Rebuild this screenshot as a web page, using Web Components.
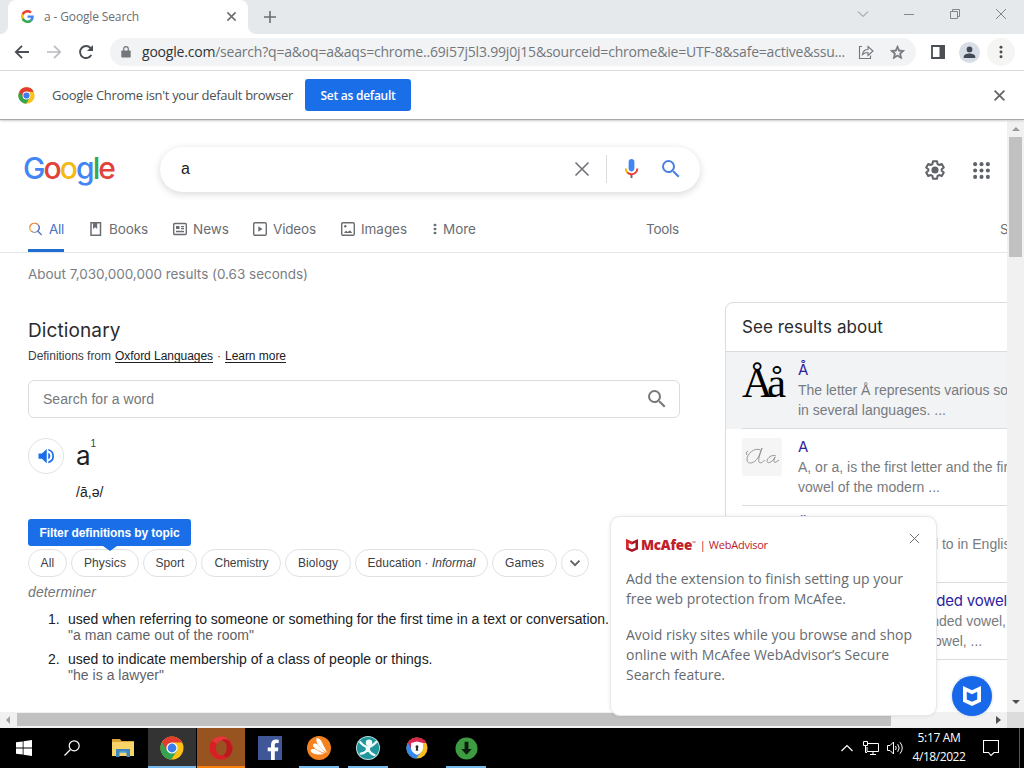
<!DOCTYPE html>
<html lang="en">
<head>
<meta charset="utf-8">
<title>a - Google Search</title>
<style>
html,body{margin:0;height:100%;overflow:hidden;background:#fff}
body{font-family:"Liberation Sans",Arial,sans-serif;font-size:14px;color:#202124}
</style>
</head>
<body>
<desktop-screen></desktop-screen>
<script>
const define = (name, css, html, after) => {
  customElements.define(name, class extends HTMLElement {
    connectedCallback() {
      if (this.shadowRoot) return;
      const root = this.attachShadow({mode: 'open'});
      root.innerHTML = `<style>*{box-sizing:border-box}${css}</style>` + (typeof html === 'function' ? html(this) : html);
      if (after) after(this, root);
    }
  });
};

// Text run whose tracking is set so that it fills the width in its "w" attribute.
define('t-run', ':host{display:inline-block;white-space:pre;flex:none}span{display:inline-block}:host([u]) span{text-decoration:underline;text-underline-offset:2px}', '<span><slot></slot></span>', (el, root) => {
  const w = parseFloat(el.getAttribute('w'));
  if (!w) return;
  el.style.width = w + 'px';
  const s = root.querySelector('span');
  const natural = s.getBoundingClientRect().width;
  s.style.letterSpacing = ((w - natural) / el.textContent.length) + 'px';
});

const chromeLogo = `<circle cx="12" cy="12" r="11.5" fill="#fbc116"/><path d="M12 12 2 6.2A11.5 11.5 0 0 0 11.2 23.5L17 14.8Z" fill="#32a350"/><path d="M12 6.6H22.2A11.5 11.5 0 0 0 2 6.3L7.2 14.7 12 12Z" fill="#e33b2e"/><circle cx="12" cy="12" r="5.6" fill="#fff"/><circle cx="12" cy="12" r="4.4" fill="#3c7ded"/>`;
const shield = 'M0 0 6 2.7 12 0V10.2L6 13 0 10.2ZM2.5 3.8V8.7L6 10.3 9.5 8.7V3.8L6 5.4Z';
const lens = 'M15.5 14h-.79l-.28-.27A6.47 6.47 0 0 0 16 9.5 6.5 6.5 0 1 0 9.5 16c1.61 0 3.09-.59 4.23-1.57l.27.28v.79l5 4.99L20.49 19l-4.99-5zm-6 0C7.01 14 5 11.99 5 9.5S7.01 5 9.5 5 14 7.01 14 9.5 11.99 14 9.5 14z';
const icons = {
  g: ['0 0 48 48', '<path fill="#EA4335" d="M24 9.5c3.54 0 6.71 1.22 9.21 3.6l6.85-6.85C35.9 2.38 30.47 0 24 0 14.62 0 6.51 5.38 2.56 13.22l7.98 6.19C12.43 13.72 17.74 9.5 24 9.5z"/><path fill="#4285F4" d="M46.98 24.55c0-1.57-.15-3.09-.38-4.55H24v9.02h12.94c-.58 2.96-2.26 5.48-4.78 7.18l7.73 6c4.51-4.18 7.09-10.36 7.09-17.65z"/><path fill="#FBBC05" d="M10.53 28.59a14.5 14.5 0 0 1 0-9.18l-7.98-6.19a24 24 0 0 0 0 21.56l7.98-6.19z"/><path fill="#34A853" d="M24 48c6.48 0 11.93-2.13 15.89-5.81l-7.73-6c-2.15 1.45-4.92 2.3-8.16 2.3-6.26 0-11.57-4.22-13.47-9.91l-7.98 6.19C6.51 42.62 14.62 48 24 48z"/>'],
  x: ['0 0 12 12', '<path d="m1.5 1.5 9 9m0-9-9 9" stroke="currentColor" stroke-width="1.7" fill="none"/>'],
  thinx: ['0 0 12 12', '<path d="m1 1 10 10m0-10-10 10" stroke="currentColor" stroke-width="1" fill="none"/>'],
  clear: ['0 0 16 16', '<path d="m1.5 1.500 13 13m0-13-13 13" stroke="currentColor" stroke-width="1.700" fill="none"/>'],
  plus: ['0 0 12 12', '<path d="M6 0v12M0 6h12" stroke="currentColor" stroke-width="1.6"/>'],
  down: ['0 0 12 12', '<path d="m1 3.5 5 5 5-5" stroke="currentColor" fill="none"/>'],
  min: ['0 0 12 12', '<path d="M1 6.5h10" stroke="currentColor"/>'],
  restore: ['0 0 12 12', '<path d="M1.5 3.5h7v7h-7zM3.5 3V1.5h7v7H9" stroke="currentColor" fill="none"/>'],
  back: ['0 0 16 16', '<path d="M15 8H2m6-6.2L1.8 8 8 14.2" stroke="currentColor" stroke-width="1.8" fill="none"/>'],
  fwd: ['0 0 16 16', '<path d="M1 8h13M8 1.8 14.2 8 8 14.2" stroke="currentColor" stroke-width="1.7" fill="none"/>'],
  reload: ['0 0 16 16', '<path d="M13.3 11A6 6 0 1 1 12.6 4.1" stroke="currentColor" stroke-width="1.9" fill="none"/><path d="M15 1v6H9z" fill="currentColor"/>'],
  lock: ['0 0 10 12', '<path d="M1.2 4.4h7.6q.9 0 .9.9v5.3q0 .9-.9.9H1.2q-.9 0-.9-.9V5.3q0-.9.9-.9z" fill="currentColor"/><path d="M2.7 5V3a2.3 2.3 0 0 1 4.6 0v2" stroke="currentColor" stroke-width="1.2" fill="none"/>'],
  share: ['0 0 16 16', '<path d="M4 2.500H1.500v12h11v-3M4.500 10.500C5 7 7 5.500 10 5.500V2.500L15 7l-5 4.500V8.500C7.500 8.500 6 9 4.500 10.500z" stroke="currentColor" fill="none" stroke-width="1.100"/>'],
  star: ['0 0 24 24', '<path d="m22 9.24-7.190-.62L12 2 9.190 8.630 2 9.240l5.460 4.730L5.820 21 12 17.270 18.180 21l-1.630-7.030L22 9.240zM12 15.400l-3.760 2.270 1-4.280-3.320-2.880 4.380-.38L12 6.100l1.710 4.040 4.380.38-3.320 2.880 1 4.280L12 15.400z" fill="currentColor" stroke="currentColor" stroke-width=".9"/>'],
  panel: ['0 0 14 14', '<path d="M1 1h12v12H1z" stroke="currentColor" stroke-width="1.8" fill="none"/><path d="M8.500 0H14v14H8.500z" fill="currentColor"/>'],
  person: ['0 0 24 24', '<circle cx="12" cy="12" r="12" fill="#d8dee6"/><path d="M12 11.800a3.300 3.300 0 1 0 0-6.600 3.300 3.300 0 0 0 0 6.600zm0 1.300c-2.800 0-6.600 1.200-6.600 3.600v1.600h13.200v-1.600c0-2.400-3.800-3.600-6.600-3.600z" fill="#434a57"/>'],
  dots: ['0 0 16 16', '<g fill="currentColor"><circle cx="8" cy="2.600" r="1.700"/><circle cx="8" cy="8" r="1.700"/><circle cx="8" cy="13.400" r="1.700"/></g>'],
  chrome: ['0 0 24 24', chromeLogo],
  mic: ['0 0 24 24', '<path fill="#4285f4" d="M12 15c1.660 0 3-1.310 3-2.970V4.980A3 3 0 0 0 12 2C10.340 2 9 3.320 9 4.980v7.050C9 13.690 10.340 15 12 15z"/><path fill="#6b6b6b" d="M11 18.080h2V22h-2z"/><path fill="#f4b400" d="M7.050 16.870A6.500 6.500 0 0 1 5 12h2c0 1.450.560 2.420 1.470 3.380v.320l-1.150 1.180z"/><path fill="#ea4335" d="M12 16.930a4.970 4.970 0 0 1-3.540-1.550l-1.410 1.490c1.260 1.340 3.020 2.130 4.950 2.130 3.870 0 6.990-2.920 6.990-7h-1.990c0 2.920-2.240 4.930-5 4.930z"/>'],
  lens: ['3 3 18 18', `<path fill="currentColor" d="${lens}"/>`],
  gear: ['0 0 24 24', '<path d="M9.800 2.500h4.400l.6 3 1.700 1 2.900-1 2.200 3.800-2.300 2v1.400l2.300 2-2.200 3.800-2.900-1-1.700 1-.6 3H9.800l-.6-3-1.700-1-2.900 1-2.200-3.800 2.300-2v-1.400l-2.300-2 2.200-3.800 2.900 1 1.700-1z" fill="none" stroke="currentColor" stroke-width="2.200" stroke-linejoin="round"/><circle cx="12" cy="12" r="3.900" fill="currentColor"/>'],
  apps: ['0 0 16 16', '<g fill="currentColor">' + [2, 8, 14].map(y => [2, 8, 14].map(x => `<circle cx="${x}" cy="${y}" r="1.900"/>`).join('')).join('') + '</g>'],
  all: ['0 0 14 14', '<g fill="none" stroke-width="1.400"><path d="M1.700 5.800A4.700 4.700 0 0 1 6.400 1.100a4.700 4.700 0 0 1 4 2" stroke="#e8883c"/><path d="M10.400 3.100a4.700 4.700 0 0 1-.7 6l4 4" stroke="#4a74c9"/><path d="M9.700 9.100a4.700 4.700 0 0 1-6.500 0" stroke="#8f93a3"/><path d="M3.200 9.100A4.700 4.700 0 0 1 1.700 5.700" stroke="#e8b73a"/></g>'],
  book: ['0 0 14 14', '<path d="M2 .8h9.500v12.400H2z" fill="none" stroke="currentColor" stroke-width="1.500"/><path d="M4 1h4.200v6L6.100 5.300 4 7z" fill="currentColor"/>'],
  news: ['0 0 14 14', '<rect x=".7" y="1.500" width="12.600" height="11" rx="1" fill="none" stroke="currentColor" stroke-width="1.400"/><path d="M3 4h3.500v3H3zM8 4h3v1.200H8zM8 6h3v1.200H8zM3 8.700h8v1.500H3z" fill="currentColor"/>'],
  video: ['0 0 14 14', '<rect x=".7" y=".7" width="12.600" height="12.600" rx="1.200" fill="none" stroke="currentColor" stroke-width="1.400"/><path d="M5.300 4.300 9.500 7 5.300 9.700z" fill="currentColor"/>'],
  image: ['0 0 14 14', '<rect x=".7" y=".7" width="12.600" height="12.600" rx="1.200" fill="none" stroke="currentColor" stroke-width="1.400"/><path d="m3 11 2-2.500 1.600 1.600L9 8.300l2.300 2.700z" fill="currentColor"/><circle cx="4.300" cy="4.300" r="1.200" fill="currentColor"/>'],
  speaker: ['0 0 24 24', '<path fill="currentColor" d="M2 8.500v7h4.500l6.500 6v-19l-6.500 6zM15 7.500v9a5 5 0 0 0 0-9zM15 2.500v2.300a7.500 7.500 0 0 1 0 14.400v2.300a9.700 9.700 0 0 0 0-19z"/>'],
  chev: ['0 0 12 12', '<path d="m1.500 3.700 4.500 4.500 4.500-4.500" stroke="#5f6368" stroke-width="1.900" fill="none"/>'],
  shieldred: ['0 0 12 13', `<path fill="#a81520" fill-rule="evenodd" d="${shield}"/><path fill="#d8282d" d="M0 0 6 2.700V5.400L2.500 3.800V8.700L0 10.200z"/>`],
  shieldwhite: ['0 0 12 13', `<path fill="#fff" fill-rule="evenodd" d="${shield}"/>`],
  cursive: ['0 0 40 38', '<g fill="none" stroke="#8d8d8d" stroke-width=".9"><path d="M18.500 12c-6-3-14 4-13.500 10 .5 5 8 4 12-4l3-8c-2 6-4 11-3 14 1 2 4 0 6-2"/><path d="M6 13c-2 1-2 3-1 4" /><path d="M34 18c-4-2-9 2-9 5 0 3 5 2 8-4-2 5-1 6 1 5l3-2"/></g>'],
  win: ['0 0 16 16', '<path fill="#fff" d="M0 2.300 6.700 1.400V7.600H0zM7.500 1.300 16 0v7.600H7.500zM0 8.400h6.700v6.200L0 13.700zM7.500 8.400H16V16l-8.500-1.200z"/>'],
  wsearch: ['0 0 16 16', '<circle cx="10.200" cy="5.800" r="5" fill="none" stroke="#fff" stroke-width="1.200"/><path d="M6.500 9.500.5 15.500" stroke="#fff" stroke-width="1.300"/>'],
  folder: ['0 0 22 18', '<path fill="#dba43a" d="M0 0h8l1.500 2H22v5H0z"/><path fill="#f8d468" d="M0 3h22v14H0z"/><path fill="#3f86bd" d="M4 10h14v8h-3.500v-4h-7v4H4z"/><path fill="#6cb1dc" d="M7.500 12.500h7V14h-7z"/>'],
  opera: ['0 0 24 24', '<path fill-rule="evenodd" fill="#d91f26" d="M12 .5a11.500 11.500 0 1 0 0 23 11.500 11.500 0 0 0 0-23zM12.500 4.500c3.200 0 5.300 3.300 5.300 7.500s-2.100 7.500-5.300 7.500S7 16.200 7 12s2.300-7.500 5.500-7.500z"/><path d="M12.500 4.500C15 1.500 19 4 20.500 6L23.500 12c0 4-2 7-5 9.500L14 19.200c2.500-1 3.800-4 3.800-7.200 0-4.200-2.100-7.500-5.300-7.500z" fill="#a3151a" opacity=".6"/><path d="M3 4.500Q7 .5 12 .5c3 0 6 1 8 3.500-3-1-5.500-1-7.500.5-2 0-3.500 1-4.500 3.500z" fill="#f0474a" opacity=".6"/>'],
  fb: ['0 0 24 24', '<path fill="#3f5798" d="M0 0h24v24H0z"/><path fill="#fff" d="M13 24v-8.800H9.700V11.400H13V8.600c0-3.300 2-5.100 5-5.100l2.700.2v3.200h-1.900c-1.600 0-2 .8-2 2v2.500h3.600l-.5 3.800h-3.100V24z"/>'],
  avast: ['0 0 24 24', '<circle cx="12" cy="12" r="12" fill="#f58220"/><path fill="#fff" d="M9.500 2.300c2.300-.6 4 .8 5 3.200L20.300 17C14.500 13 8.200 7.500 9.500 2.300z"/><path fill="#fff" d="M6 8.200c1.500-1.400 3.300-.8 4.700.3L18.500 17C12 15.500 5 12 6 8.200z"/><path fill="#fff" d="M3.500 14.500c.8-1.700 2.500-1.800 4-1.400l9.500 5c-5 1.200-12.800.3-13.500-3.600z"/>'],
  man: ['0 0 24 24', '<circle cx="12" cy="12" r="12" fill="#b5dfe0"/><circle cx="12" cy="12" r="11" fill="#1e969b"/><circle cx="13" cy="6.700" r="3.200" fill="#f2fbfa"/><path d="M4.300 6.300C7 9.500 9 11 12 11s5.500-2 8.200-5M12 11.500c0 3-3.500 6-7.300 6.200M12.300 13c1 2.500 3 5 6.200 6" fill="none" stroke="#f2fbfa" stroke-width="2.300" stroke-linecap="round"/><path d="M9.500 10.500h5L13.500 16H10z" fill="#f2fbfa"/>'],
  secure: ['0 0 24 24', '<circle cx="12" cy="12" r="11.500" fill="#f8bd22"/><path d="M12 12 2 6.200A11.500 11.500 0 0 0 11.200 23.500L17 14.800Z" fill="#3489ed"/><path d="M12 6.600H22.200A11.500 11.500 0 0 0 2 6.300L7.200 14.700 12 12Z" fill="#d8284e"/><path fill="#fff" d="M12 4.800 18.500 6.500V12c0 3.500-3 6-6.500 7.500C8.500 18 5.500 15.500 5.500 12V6.500z"/><path d="M12 9a1.700 1.700 0 0 1 1 3l.4 3h-2.800l.4-3a1.700 1.700 0 0 1 1-3z" fill="#303030"/>'],
  dl: ['0 0 24 24', '<circle cx="12" cy="12" r="11.500" fill="#3d9b41"/><path fill="#0b1c0c" d="M10 5h4v7.500h3.500L12 18.500l-5.500-6H10z"/>'],
  up: ['0 0 12 12', '<path d="M.5 9 6 3.500 11.500 9" stroke="#fff" stroke-width="1.200" fill="none"/>'],
  net: ['0 0 16 14', '<path d="M5 2.500h10.500v8H4V6M7 13.500h6M10 10.500v3" stroke="#fff" fill="none"/><path d="M.5.500h4v4h-4zM2.500 4.500v7H4" stroke="#fff" fill="none"/>'],
  vol: ['0 0 17 14', '<path d="M.5 4.500H3L6.500 1v12L3 9.500H.5z" stroke="#fff" fill="none"/><path d="M8.500 5q1.500 2 0 4M10.700 3.200q3 3.800 0 7.600M13 1.300q4.500 5.700 0 11.400" stroke="#fff" fill="none"/>'],
  note: ['0 0 16 16', '<path d="M.5.500h15v12H11L8 15.500 5.500 12.500h-5z" stroke="#fff" stroke-width="1.100" fill="none"/>'],
  triu: ['0 0 8 4', '<path d="M0 4 4 0l4 4z" fill="currentColor"/>'],
  trid: ['0 0 8 4', '<path d="M0 0h8L4 4z" fill="currentColor"/>'],
  tril: ['0 0 4 8', '<path d="M4 0v8L0 4z" fill="currentColor"/>'],
  trir: ['0 0 4 8', '<path d="M0 0v8l4-4z" fill="currentColor"/>']
};
// Icon by name; s is the width, h the height when the drawing is not square.
define('ui-icon', ':host{display:inline-flex;flex:none}svg{display:block}', el => {
  const [box, body] = icons[el.getAttribute('n')];
  const s = el.getAttribute('s'), h = el.getAttribute('h') || s;
  return `<svg width="${s}" height="${h}" viewBox="${box}" preserveAspectRatio="none">${body}</svg>`;
});

define('tab-strip', `
:host{display:flex;height:34px;background:#e6e9ec;padding-left:8px;font:12px "Open Sans",sans-serif;color:#6a6e73;position:relative}
:host::before,:host::after{content:"";width:8px;height:8px;position:absolute;left:0;top:26px;background:radial-gradient(circle at 0 0,#e6e9ec 7.500px,#fff 8.500px)}
:host::after{left:248px;background:radial-gradient(circle at 8px 0,#e6e9ec 7.500px,#fff 8.500px)}
.tab{width:240px;background:#fff;border-radius:8px 8px 0 0;display:flex;align-items:center;padding:0 11px 1px 13px}
.tab t-run{margin-left:10px}
.tab .x{margin-left:auto}
.new{margin:11px 0 0 16px}
.win{margin-left:auto;display:flex;gap:34px;padding:8px 17px 0 0;color:#858585}`,
`<div class="tab"><ui-icon n="g" s="13"></ui-icon><t-run w="95">a - Google Search</t-run><ui-icon class="x" n="x" s="11"></ui-icon></div>
<ui-icon class="new" n="plus" s="12"></ui-icon>
<div class="win"><ui-icon n="down" s="12"></ui-icon><ui-icon n="min" s="12"></ui-icon><ui-icon n="restore" s="12"></ui-icon><ui-icon n="thinx" s="12"></ui-icon></div>`);

define('tool-bar', `
:host{display:flex;height:37px;align-items:center;background:#fff;border-bottom:1px solid #dcdcde;padding-left:14px;color:#4b4f54}
.b{margin-right:16px}
.f{color:#b9bbbe}
.omni{width:806px;height:28px;border-radius:14px;background:#f1f3f4;display:flex;align-items:center;padding-left:11px;font:14px/20px "Open Sans",sans-serif;color:#73777c}
.omni b{font-weight:400;color:#2f3236}
.omni .l{margin-right:11px}
.more{width:28px;height:28px;border-radius:50%;background:#f5f5f4;display:flex;align-items:center;justify-content:center;margin-left:7px}`,
`<ui-icon class="b" n="back" s="16"></ui-icon><ui-icon class="b f" n="fwd" s="16"></ui-icon><ui-icon class="b" n="reload" s="16"></ui-icon>
<div class="omni"><ui-icon class="l" n="lock" s="10" h="12"></ui-icon><t-run w="703"><b>google.com</b>/search?q=a&amp;oq=a&amp;aqs=chrome..69i57j5l3.99j0j15&amp;sourceid=chrome&amp;ie=UTF-8&amp;safe=active&amp;ssu...</t-run><ui-icon n="share" s="16" style="margin-left:13px"></ui-icon><ui-icon n="star" s="17" style="margin-left:15px"></ui-icon></div>
<ui-icon n="panel" s="14" style="margin-left:15px"></ui-icon><ui-icon n="person" s="21" style="margin-left:14px"></ui-icon><div class="more"><ui-icon n="dots" s="14"></ui-icon></div>`);

define('info-bar', `
:host{display:flex;height:49px;align-items:center;background:#fff;border-bottom:1px solid #a9a9a9;box-shadow:0 1px 2px #ccc;padding:0 18px;font:13px "Open Sans",sans-serif;color:#4c4f53;position:relative;z-index:2;margin-bottom:1px;box-sizing:border-box}
.msg{margin-left:18px}
button{margin:0 0 0 12px;width:106px;height:32px;border:0;border-radius:3px;background:#1a6fe8;color:#fff;font:600 12px "Open Sans",sans-serif;padding:0}
.x{margin-left:auto;color:#666}`,
`<ui-icon n="chrome" s="17"></ui-icon><t-run class="msg" style="margin-left:17px" w="241">Google Chrome isn't your default browser</t-run><button><t-run w="75">Set as default</t-run></button><ui-icon class="x" n="x" s="13"></ui-icon>`);

define('search-header', `
:host{display:flex;height:86px;padding:26px 0 0 23px}
.logo{font:500 30px/34px Inter,sans-serif;width:137px;height:40px;padding-top:4px}
.box{width:540px;height:45px;border-radius:23px;background:#fff;box-shadow:0 2px 6px 1px rgba(64,60,67,.16);display:flex;align-items:center;padding:0 0 2px 21px;font-size:16px;color:#202124}
.box>span{width:393px}
.sep{width:1px;height:28px;background:#dadce0;margin:0 13px 0 16px}
.r{display:flex;align-items:center;height:46px;color:#5f6368;margin-left:224px}`,
`<div class="logo"><t-run w="91"><span style="color:#4285f4">G</span><span style="color:#e1433b">o</span><span style="color:#f4b912">o</span><span style="color:#4285f4">g</span><span style="color:#34a853">l</span><span style="color:#e1433b">e</span></t-run></div>
<div class="box"><span>a</span><ui-icon n="clear" s="16" style="color:#73767a"></ui-icon><div class="sep"></div><ui-icon n="mic" s="23"></ui-icon><ui-icon n="lens" s="18" style="color:#4a80e0;margin-left:19px"></ui-icon></div>
<div class="r"><ui-icon n="gear" s="22"></ui-icon><ui-icon n="apps" s="17" style="margin-left:27px"></ui-icon></div>`);

define('nav-item', `
:host{display:flex;align-items:center;height:45px;gap:6px;font:13.500px Inter,sans-serif;color:#6a6e73;padding-bottom:1px;box-sizing:border-box;white-space:nowrap}
:host([on]){color:#4472cc;width:36px;border-bottom:3px solid #1f6fd0;padding-top:3px;gap:7px}`, '<slot></slot>');

define('search-nav', `
:host{display:grid;grid-template-columns:61px 84px 80px 88px 87px 218px 354px 90px;height:46px;padding-left:28px;border-bottom:1px solid #e4e6e9}`,
`<nav-item on><ui-icon n="all" s="14"></ui-icon><t-run w="15">All</t-run></nav-item>
<nav-item><ui-icon n="book" s="14"></ui-icon><t-run w="39">Books</t-run></nav-item>
<nav-item><ui-icon n="news" s="14"></ui-icon><t-run w="36">News</t-run></nav-item>
<nav-item><ui-icon n="video" s="14"></ui-icon><t-run w="43">Videos</t-run></nav-item>
<nav-item><ui-icon n="image" s="14"></ui-icon><t-run w="46">Images</t-run></nav-item>
<nav-item style="gap:1px"><ui-icon n="dots" s="14" h="12"></ui-icon><t-run w="33">More</t-run></nav-item>
<nav-item><t-run w="33">Tools</t-run></nav-item><nav-item>S</nav-item>`);

define('topic-chip', `
:host{display:flex;align-items:center;justify-content:center;height:28px;border:1px solid #dfe1e5;border-radius:14px;background:#fff;color:#3c4043;font-size:12px;box-sizing:border-box;flex:none}`, '<slot></slot>');

define('dictionary-entry', `
:host{display:block;width:725px;flex:none;padding-left:28px;box-sizing:border-box}
.stats{height:42px;font:13.500px/42px Inter,sans-serif;color:#7a7e83}
.h{margin-top:20px;font:19px/32px Inter,sans-serif;height:30px;color:#2a2b2e}
.src{margin-top:1px;height:20px;font-size:12px;line-height:20px;display:flex;gap:4px;color:#3c4043}
.src .u{color:#202124}
.find{margin-top:14px;width:652px;height:38px;border:1px solid #dadce0;border-radius:6px;display:flex;align-items:center;justify-content:space-between;padding:0 13px 0 14px;color:#75787c}
.word{margin-top:20px;display:flex;height:36px}
.say{width:36px;height:36px;border:1px solid #dfe1e5;border-radius:50%;display:flex;align-items:center;justify-content:center;color:#1a6fe8}
.w{font:26px/35px Inter,sans-serif;margin-left:12px}
sup{font:10px/10px "Liberation Sans",sans-serif;color:#3c4043;margin:0;padding-top:1px}
.ph{margin:8px 0 0 48px;height:20px;line-height:20px}
.tip{margin-top:17px;width:163px;height:27px;border-radius:3px;background:#1a6fe8;color:#fff;font-weight:700;font-size:12px;display:flex;align-items:center;justify-content:center;position:relative}
.tip::after{content:"";position:absolute;left:75px;top:27px;border:7px solid transparent;border-top:5px solid #1a6fe8;border-bottom:0}
.chips{display:flex;gap:4px;margin-top:3px}
.pos{margin-top:5px;height:20px;line-height:20px;color:#70757a;font-style:italic}
ol{list-style:none;margin:9px 0 0;padding:0 0 0 20px;line-height:16px}
li{display:grid;grid-template-columns:20px auto;margin-bottom:8px;height:32px}
.q{color:#5f6368;grid-column:2}`,
`<div class="stats"><t-run w="280">About 7,030,000,000 results (0.63 seconds)</t-run></div>
<div class="h"><t-run w="92.500">Dictionary</t-run></div>
<div class="src"><t-run w="83">Definitions from</t-run><t-run u class="u" w="98">Oxford Languages</t-run><span>·</span><t-run u class="u" w="61">Learn more</t-run></div>
<div class="find"><t-run w="111">Search for a word</t-run><ui-icon n="lens" s="18"></ui-icon></div>
<div class="word"><div class="say"><ui-icon n="speaker" s="18"></ui-icon></div><span class="w">a</span><sup>1</sup></div>
<div class="ph"><t-run w="27.500">/ā,ə/</t-run></div>
<div class="tip"><t-run w="140">Filter definitions by topic</t-run></div>
<div class="chips"><topic-chip style="width:39px"><t-run w="14">All</t-run></topic-chip><topic-chip style="width:68px"><t-run w="42">Physics</t-run></topic-chip><topic-chip style="width:54px"><t-run w="29">Sport</t-run></topic-chip><topic-chip style="width:80px;padding-left:1px"><t-run w="54">Chemistry</t-run></topic-chip><topic-chip style="width:66px"><t-run w="40">Biology</t-run></topic-chip><topic-chip style="width:133px"><t-run w="108">Education · <i>Informal</i></t-run></topic-chip><topic-chip style="width:65px"><t-run w="39">Games</t-run></topic-chip><topic-chip style="width:28px"><ui-icon n="chev" s="12"></ui-icon></topic-chip></div>
<div class="pos"><t-run w="68">determiner</t-run></div>
<ol><li><span>1.</span><t-run w="541">used when referring to someone or something for the first time in a text or conversation.</t-run><t-run class="q" w="186">"a man came out of the room"</t-run></li>
<li><span>2.</span><t-run w="364.500">used to indicate membership of a class of people or things.</t-run><t-run class="q" w="96">"he is a lawyer"</t-run></li></ol>`);

define('about-item', `
:host{display:flex;height:77px;padding-left:16px;box-sizing:border-box}
:host([on]){background:#f1f3f4}
.in{display:flex;flex:1;border-bottom:1px solid #dadce0;white-space:nowrap}
.pic{width:56px;padding-top:9px}
.tx{padding-top:7px;line-height:20px;color:#777b80}
.t{height:21px;font:15px/22px Inter,sans-serif;color:#2f22a0}`,
`<div class="in"><div class="pic"><slot name="pic"></slot></div><div class="tx"><div class="t"><slot name="t"></slot></div><slot></slot></div></div>`);

define('about-card', `
:host{display:block;flex:none;width:320px;height:420px;margin-top:49px;border:1px solid #dadce0;border-radius:8px 0 0 0;overflow:hidden;box-sizing:border-box}
.h{height:49px;line-height:48px;padding-left:16px;font-family:Inter,sans-serif;font-size:17px;border-bottom:1px solid #dadce0;color:#2a2b2e}
.aa{display:block;font:43px/44px "Liberation Serif",serif;color:#000}
.c{width:40px;height:38px;background:#f5f5f5;border-radius:3px}`,
`<div class="h"><t-run w="141">See results about</t-run></div>
<about-item on><t-run class="aa" slot="pic" w="38">Åå</t-run><span slot="t">Å</span><div>The letter Å represents various so</div><t-run w="148">in several languages. ...</t-run></about-item>
<about-item><div class="c" slot="pic"><ui-icon n="cursive" s="40" h="38"></ui-icon></div><span slot="t">A</span><div>A, or a, is the first letter and the fir</div><t-run w="142">vowel of the modern ...</t-run></about-item>
<about-item><span slot="t">Ă</span><div style="padding-left:91px">referred to in English</div></about-item>
<about-item><t-run slot="t" w="102" style="padding-left:107px;box-sizing:content-box">rounded vowel</t-run><div style="padding-left:113px">rounded vowel,</div><div style="padding-left:129px">vowel, ...</div></about-item>`);

define('advisor-popup', `
:host{display:block;position:absolute;left:610px;top:395px;width:327px;height:200px;box-sizing:border-box;background:#fff;border:1px solid #e8e8e8;border-radius:10px;box-shadow:0 0 4px rgba(0,0,0,.08);padding:19px 15px;font:14px/20px "Open Sans",sans-serif;color:#666b71}
.top{display:flex;align-items:center;height:18px;color:#c0202a;margin-bottom:15px}
.m{font-weight:800;font-size:13.500px;margin-left:3px}
.tm{font-size:5px;align-self:flex-start;line-height:14px}
.wa{font-size:11px;margin-left:4px}
.bar{margin-left:4px;font-size:11px;width:5px}
.x{position:absolute;right:16px;top:16px;color:#666}
p{margin:0 0 16px}
p t-run{display:block}`,
`<div class="top"><ui-icon n="shieldred" s="12" h="13"></ui-icon><t-run class="m" w="51">McAfee</t-run><span class="tm">™</span><span class="bar">|</span><t-run class="wa" w="59">WebAdvisor</t-run></div><ui-icon class="x" n="thinx" s="11"></ui-icon>
<p><t-run w="277">Add the extension to finish setting up your</t-run><t-run w="220">free web protection from McAfee.</t-run></p>
<p><t-run w="286">Avoid risky sites while you browse and shop</t-run><t-run w="263">online with McAfee WebAdvisor’s Secure</t-run><t-run w="99">Search feature.</t-run></p>`);

define('advisor-badge', `
:host{position:absolute;left:952px;top:555px;width:40px;height:40px;border-radius:50%;background:#1769ea;display:flex;align-items:center;justify-content:center;box-shadow:0 0 3px #b9c9e2}`,
`<ui-icon n="shieldwhite" s="18" h="20"></ui-icon>`);

define('scroll-v', `
:host{display:flex;flex-direction:column;align-items:center;justify-content:space-between;width:17px;background:#f1f1f1;padding:6px 0 8px;box-sizing:border-box}
.th{width:13px;height:120px;background:#c1c1c1;margin:6px 0 auto}`,
`<ui-icon n="triu" s="8" h="4" style="color:#999"></ui-icon><div class="th"></div><ui-icon n="trid" s="8" h="4" style="color:#505050"></ui-icon>`);
define('scroll-h', `
:host{display:flex;align-items:center;height:16px;background:#f1f1f1;padding:0 0 1px 6px;box-sizing:border-box}
.th{width:874px;height:13px;background:#c1c1c1;margin:0 auto 0 7px}
.c{width:17px;height:16px;background:#dcdcdc;margin:0 0 -1px 6px}`,
`<ui-icon n="tril" s="4" h="8" style="color:#a0a0a0"></ui-icon><div class="th"></div><ui-icon n="trir" s="5" h="8" style="color:#505050"></ui-icon><div class="c"></div>`);

define('results-page', `
:host{display:flex;position:relative;height:591px;width:1024px}
.view{width:1007px;overflow:hidden;background:#fff}
.wide{width:1100px}
.cols{display:flex}`,
`<div class="view"><div class="wide"><search-header></search-header><search-nav></search-nav><div class="cols"><dictionary-entry></dictionary-entry><about-card></about-card></div></div></div><scroll-v></scroll-v><advisor-popup></advisor-popup><advisor-badge></advisor-badge>`);

define('task-cell', `
:host{display:flex;align-items:center;justify-content:center;width:48px;height:40px;box-sizing:border-box;flex:none;margin-right:1px}
:host([run]){background:linear-gradient(#76b9ed,#76b9ed) center bottom/40px 2px no-repeat}`,
el => `<ui-icon n="${el.getAttribute('icon')}" s="${el.getAttribute('s') || 24}" h="${el.getAttribute('h') || el.getAttribute('s') || 24}"></ui-icon>`);

define('task-bar', `
:host{display:flex;height:40px;background:#000;color:#fff;align-items:center;font:12px/19px "Open Sans",sans-serif}
.tray{margin-left:auto;display:flex;align-items:center}
.clock{display:flex;flex-direction:column;align-items:center;width:54px;margin-left:8px;padding-bottom:2px}
.end{width:1px;height:40px;background:#555;margin-left:20px;margin-right:4px}`,
`<task-cell icon="win" s="16" style="margin:0"></task-cell><task-cell icon="wsearch" s="16"></task-cell><task-cell icon="folder" s="22" h="18" style="padding-left:3px"></task-cell>
<task-cell icon="chrome" style="background:#333;border-bottom:2px solid #76b9ed;padding-top:2px;margin-left:2px"></task-cell><task-cell icon="opera" style="background:#985420;border-bottom:2px solid #f77f0c;padding-top:2px"></task-cell><task-cell icon="fb"></task-cell><task-cell run icon="avast"></task-cell><task-cell run icon="man"></task-cell><task-cell icon="secure" s="22"></task-cell><task-cell run icon="dl" s="23"></task-cell>
<div class="tray"><ui-icon n="up" s="12"></ui-icon><ui-icon n="net" s="16" h="14" style="margin-left:10px"></ui-icon><ui-icon n="vol" s="17" h="14" style="margin-left:8px"></ui-icon><div class="clock"><t-run w="43">5:17 AM</t-run><t-run w="53">4/18/2022</t-run></div><ui-icon n="note" s="16" style="margin-left:17px"></ui-icon><div class="end"></div></div>`);

define('desktop-screen', ':host{display:flex;flex-direction:column;width:1024px;height:768px;overflow:hidden}',
`<tab-strip></tab-strip><tool-bar></tool-bar><info-bar></info-bar><results-page></results-page><scroll-h></scroll-h><task-bar></task-bar>`);
</script>
</body>
</html>
